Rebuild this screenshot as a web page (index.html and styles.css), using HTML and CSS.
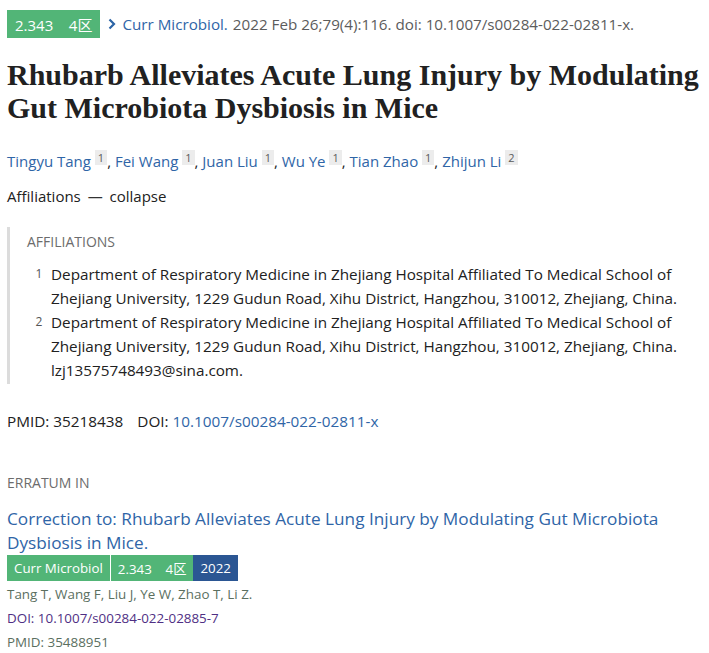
FILE: index.html
```html
<!DOCTYPE html>
<html>
<head>
<meta charset="utf-8">
<link rel="stylesheet" href="styles.css">
</head>
<body>
<div class="page">
  <div class="cite-line">
    <span class="badge green">2.343&nbsp;&nbsp;&nbsp;&nbsp;4区</span>
    <svg class="chev" width="10" height="12" viewBox="0 0 10 12"><path d="M2.5 1.5 L7 6 L2.5 10.5" fill="none" stroke="#2b64a6" stroke-width="2.2"/></svg>
    <a class="link">Curr Microbiol.</a>
    <span class="cite-text">2022 Feb 26;79(4):116. doi: 10.1007/s00284-022-02811-x.</span>
  </div>

  <h1 class="title">Rhubarb Alleviates Acute Lung Injury by Modulating Gut Microbiota Dysbiosis in Mice</h1>

  <div class="authors">
    <a class="link">Tingyu Tang</a> <sup class="aff-num">1</sup>, <a class="link">Fei Wang</a> <sup class="aff-num">1</sup>, <a class="link">Juan Liu</a> <sup class="aff-num">1</sup>, <a class="link">Wu Ye</a> <sup class="aff-num">1</sup>, <a class="link">Tian Zhao</a> <sup class="aff-num">1</sup>, <a class="link">Zhijun Li</a> <sup class="aff-num">2</sup>
  </div>

  <div class="aff-toggle">Affiliations <span class="dash">—</span> collapse</div>

  <div class="aff-box">
    <div class="aff-heading">AFFILIATIONS</div>
    <ul class="aff-list">
      <li><span class="num">1</span><span class="txt">Department of Respiratory Medicine in Zhejiang Hospital Affiliated To Medical School of Zhejiang University, 1229 Gudun Road, Xihu District, Hangzhou, 310012, Zhejiang, China.</span></li>
      <li><span class="num">2</span><span class="txt">Department of Respiratory Medicine in Zhejiang Hospital Affiliated To Medical School of Zhejiang University, 1229 Gudun Road, Xihu District, Hangzhou, 310012, Zhejiang, China. lzj13575748493@sina.com.</span></li>
    </ul>
  </div>

  <div class="ids">PMID: 35218438<span class="gap"></span>DOI: <a class="link">10.1007/s00284-022-02811-x</a></div>

  <div class="erratum-heading">ERRATUM IN</div>
  <a class="erratum-title">Correction to: Rhubarb Alleviates Acute Lung Injury by Modulating Gut Microbiota Dysbiosis in Mice.</a>
  <div class="badge-row">
    <span class="badge small green">Curr Microbiol</span><span class="badge small green sep">2.343&nbsp;&nbsp;&nbsp;&nbsp;4区</span><span class="badge small blue">2022</span>
  </div>
  <div class="meta authors-short">Tang T, Wang F, Liu J, Ye W, Zhao T, Li Z.</div>
  <div class="meta doi">DOI: 10.1007/s00284-022-02885-7</div>
  <div class="meta pmid">PMID: 35488951</div>
</div>
</body>
</html>
```

FILE: styles.css
```css
html, body {
  margin: 0;
  padding: 0;
  background: #ffffff;
}
body {
  font-family: "Open Sans", "Noto Sans CJK SC", sans-serif;
  color: #212121;
  font-size: 15px;
}
.page {
  padding: 10px 7px 0 7px;
}
.link {
  color: #2f65a7;
  text-decoration: none;
}
.cite-line {
  display: flex;
  align-items: center;
  height: 28px;
  white-space: nowrap;
}
.cite-line .link, .cite-text { font-size: 15.2px; }
.badge {
  display: inline-flex;
  align-items: center;
  height: 28px;
  padding: 0 8px;
  color: #ffffff;
  font-size: 15px;
}
.badge.small {
  height: 26px;
  padding: 0 7px;
  font-size: 13.3px;
}
.green { background: #52b577; }
.blue { background: #2b5693; }
.chev { margin: 0 5px 0 7px; }
.cite-text { color: #5c5c5c; margin-left: 5px; }
.title {
  font-family: "Liberation Serif", serif;
  font-weight: bold;
  font-size: 30px;
  line-height: 33px;
  margin: 20px -7px 0 0;
  color: #212121;
}
.authors {
  margin-top: 22px;
  line-height: 24px;
}
.aff-num {
  font-size: 11px;
  background: #ececec;
  color: #5a5a5a;
  padding: 0 3px;
  vertical-align: 5px;
}
.aff-toggle {
  margin-top: 11px;
  line-height: 24px;
}
.dash { color: #333; margin: 0 3px; }
.aff-box {
  margin-top: 19px;
  border-left: 3px solid #dcdcdc;
  padding: 4px 0 2px 17px;
}
.aff-heading {
  color: #6c6c6c;
  font-size: 14px;
  line-height: 22px;
  margin-bottom: 9px;
}
.aff-list {
  list-style: none;
  margin: 0;
  padding: 0;
}
.aff-list li {
  display: flex;
  line-height: 24px;
}
.aff-list .txt { font-size: 15.25px; }
.aff-list .num {
  color: #555;
  font-size: 12px;
  width: 24px;
  flex: none;
  text-align: center;
}
.ids {
  margin-top: 25px;
  line-height: 24px;
  font-size: 15.3px;
}
.gap { display: inline-block; width: 14px; }
.erratum-heading {
  color: #6c6c6c;
  font-size: 14px;
  margin-top: 38px;
  line-height: 24px;
}
.erratum-title {
  display: block;
  margin-top: 12px;
  font-size: 17.2px;
  line-height: 24px;
  color: #2f65a7;
}
.badge-row {
  display: flex;
  margin-top: 0;
}
.sep { border-left: 1px solid #fff; }
.meta {
  line-height: 24px;
  font-size: 13.4px;
}
.authors-short { color: #5b6f5f; margin-top: 1px; }
.doi { color: #4f2f84; }
.pmid { color: #5b6f5f; }
```
